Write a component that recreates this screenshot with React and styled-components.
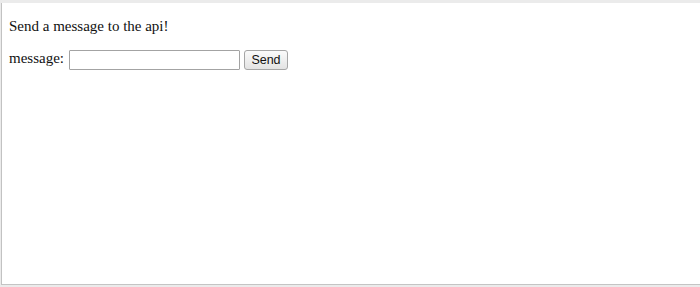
import React from "react";
import styled, { createGlobalStyle } from "styled-components";

const Global = createGlobalStyle`
  html, body { margin: 0; padding: 0; }
  body {
    background: #ebebeb;
    height: 287px;
    overflow: hidden;
  }
`;

const Frame = styled.div`
  box-sizing: border-box;
  margin: 3px 0 0 1px;
  height: 282px;
  border-left: 1px solid #c2c2c2;
  border-bottom: 1px solid #c4c4c4;
  background: #ffffff;
  padding: 15px 0 0 7px;
  font-family: "Liberation Serif", "Times New Roman", serif;
  font-size: 15px;
  color: #111;
`;

const Heading = styled.p`
  margin: 0 0 15px 0;
  line-height: 17px;
`;

const Row = styled.form`
  display: flex;
  align-items: flex-start;
  margin: 0;
`;

const Label = styled.label`
  line-height: 17px;
  margin-right: 5px;
`;

const TextInput = styled.input`
  box-sizing: border-box;
  width: 171px;
  height: 20px;
  margin: 0 4px 0 0;
  padding: 1px 2px;
  border: 1px solid #a3a3a3;
  border-radius: 1px;
  background: #fff;
  font-family: "Liberation Sans", Arial, sans-serif;
  font-size: 12px;
  outline: none;
`;

const Button = styled.button`
  box-sizing: border-box;
  width: 44px;
  height: 20px;
  margin: 0;
  padding: 0;
  border: 1px solid #a6a6a6;
  border-radius: 3px;
  background: linear-gradient(#fbfbfb, #e3e3e3);
  color: #111;
  font-family: "Liberation Sans", Arial, sans-serif;
  font-size: 12.5px;
  line-height: 18px;
  text-align: center;
  cursor: pointer;
`;

export default function App() {
  return (
    <>
      <Global />
      <Frame>
        <Heading>Send a message to the api!</Heading>
        <Row onSubmit={(e) => e.preventDefault()}>
          <Label htmlFor="msg">message:</Label>
          <TextInput id="msg" type="text" />
          <Button type="submit">Send</Button>
        </Row>
      </Frame>
    </>
  );
}
